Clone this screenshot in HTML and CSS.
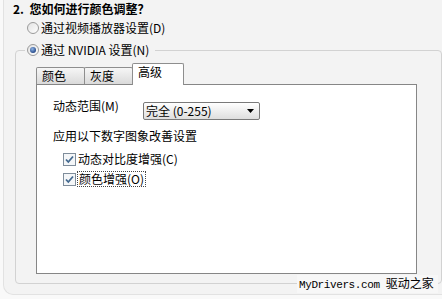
FILE: index.html
```html
<!DOCTYPE html>
<html>
<head>
<meta charset="utf-8">
<link rel="stylesheet" href="styles.css">
</head>
<body>
<div class="outer">
  <div class="title">2.&nbsp;&nbsp;您如何进行颜色调整？</div>
  <div class="opt">
    <svg class="radio" width="12" height="12" viewBox="0 0 12 12"><defs><linearGradient id="rg1" x1="0" y1="0" x2="1" y2="1"><stop offset="0" stop-color="#e2e2e2"/><stop offset="1" stop-color="#ffffff"/></linearGradient></defs><circle cx="6" cy="6" r="5.5" fill="url(#rg1)" stroke="#9a9a9a"/></svg>
    <span>通过视频播放器设置(D)</span>
  </div>
  <fieldset class="group">
    <legend class="legend">
      <div class="opt">
        <svg class="radio" width="12" height="12" viewBox="0 0 12 12"><defs><linearGradient id="rg2" x1="0" y1="0" x2="1" y2="1"><stop offset="0" stop-color="#e2e2e2"/><stop offset="1" stop-color="#ffffff"/></linearGradient><radialGradient id="dot" cx="0.4" cy="0.35" r="0.7"><stop offset="0" stop-color="#8fb4e6"/><stop offset="1" stop-color="#1b3f80"/></radialGradient></defs><circle cx="6" cy="6" r="5.5" fill="url(#rg2)" stroke="#9a9a9a"/><circle cx="6" cy="6" r="3" fill="url(#dot)"/></svg>
        <span>通过 NVIDIA 设置(N)</span>
      </div>
    </legend>
    <div class="inner">
      <div class="tabs">
        <div class="tab">颜色</div>
        <div class="tab">灰度</div>
        <div class="tab sel">高级</div>
      </div>
      <div class="panel">
        <div class="row">
          <span class="lbl">动态范围(M)</span>
          <div class="combo">
            <span>完全 (0-255)</span>
            <svg width="7" height="4" viewBox="0 0 7 4"><path d="M0 0H7L3.5 4Z" fill="#000"/></svg>
          </div>
        </div>
        <div class="sect">应用以下数字图象改善设置</div>
        <div class="chk">
          <svg width="13" height="13" viewBox="0 0 13 13"><rect x="0.5" y="0.5" width="12" height="12" fill="#f4f6f8" stroke="#7f8d9b"/><path d="M3 6.5L5.3 9L10 3.5" fill="none" stroke="#43698f" stroke-width="1.8"/></svg>
          <span>动态对比度增强(C)</span>
        </div>
        <div class="chk">
          <svg width="13" height="13" viewBox="0 0 13 13"><rect x="0.5" y="0.5" width="12" height="12" fill="#f4f6f8" stroke="#7f8d9b"/><path d="M3 6.5L5.3 9L10 3.5" fill="none" stroke="#43698f" stroke-width="1.8"/></svg>
          <span class="focus">颜色增强(O)</span>
        </div>
      </div>
    </div>
  </fieldset>
</div>
<div class="mark"><span class="lat">MyDrivers.com </span><span>驱动之家</span></div>
</body>
</html>
```
FILE: styles.css
```css
html, body {
  margin: 0;
  padding: 0;
}
body {
  width: 442px;
  height: 299px;
  overflow: hidden;
  background: #f9f9f9;
  font: 12px/14px "Noto Sans CJK SC", "Liberation Sans", sans-serif;
  color: #000;
  position: relative;
}
.outer {
  box-sizing: border-box;
  margin-left: 3px;
  height: 295px;
  border-left: 1px solid #e2e2e2;
  border-bottom: 1px solid #e2e2e2;
  border-bottom-left-radius: 10px;
  background: #f3f3f3;
}
.title {
  padding-top: 2px;
  margin-left: 9px;
  font-weight: bold;
  line-height: 14px;
  height: 14px;
}
.opt {
  display: flex;
  align-items: center;
  height: 14px;
  line-height: 14px;
  white-space: nowrap;
}
.outer > .opt {
  margin-top: 5px;
  margin-left: 23px;
}
.radio {
  flex: none;
  margin-right: 2px;
}
.group {
  box-sizing: border-box;
  margin: 8px 0 0 11px;
  width: 427px;
  min-width: 0;
  border: 1px solid #d2d2d2;
  border-radius: 4px;
  padding: 6px 24px 9px 0;
}
.legend {
  margin-left: 9px;
  padding: 0 6px 0 2px;
}
.inner {
  padding-left: 20px;
}
.tabs {
  display: flex;
  align-items: flex-end;
}
.tab {
  box-sizing: border-box;
  width: 49px;
  height: 17px;
  border: 1px solid #8e8e8e;
  border-bottom: 0;
  padding-left: 5px;
  line-height: 15px;
  background: linear-gradient(#f6f6f6, #dadada);
  border-radius: 2px 2px 0 0;
}
.tab + .tab {
  margin-left: -1px;
}
.tab.sel {
  position: relative;
  width: 52px;
  height: 22px;
  margin-bottom: -1px;
  background: #fff;
  line-height: 16px;
}
.panel {
  box-sizing: border-box;
  width: 381px;
  height: 190px;
  border: 1px solid #868686;
  background: #fff;
  padding: 17px 0 0 16px;
}
.row {
  display: flex;
  align-items: flex-start;
}
.lbl {
  width: 90px;
  margin-top: -3px;
  line-height: 14px;
}
.combo {
  box-sizing: border-box;
  width: 117px;
  height: 18px;
  border: 1px solid #7a7a7a;
  border-radius: 2px;
  background: linear-gradient(#ffffff, #dedede);
  display: flex;
  align-items: center;
  justify-content: space-between;
  padding: 0 5px 0 2px;
  line-height: 14px;
}
.sect {
  margin-top: 9px;
  line-height: 14px;
}
.chk {
  display: flex;
  align-items: center;
  height: 20px;
  margin-left: 10px;
}
.chk:first-of-type {
  margin-top: 6px;
}
.sect + .chk {
  margin-top: 6px;
}
.chk svg {
  flex: none;
  margin-right: 2px;
}
.focus {
  outline: 1px dotted #444;
  padding: 0 1px;
}
.mark {
  position: absolute;
  left: 297px;
  top: 275px;
  padding: 1px 4px 1px 2px;
  background: #f7f7f7;
  white-space: nowrap;
  line-height: 13px;
}
.lat {
  font-family: "Liberation Mono", monospace;
  font-size: 11px;
  letter-spacing: -0.4px;
}
```
